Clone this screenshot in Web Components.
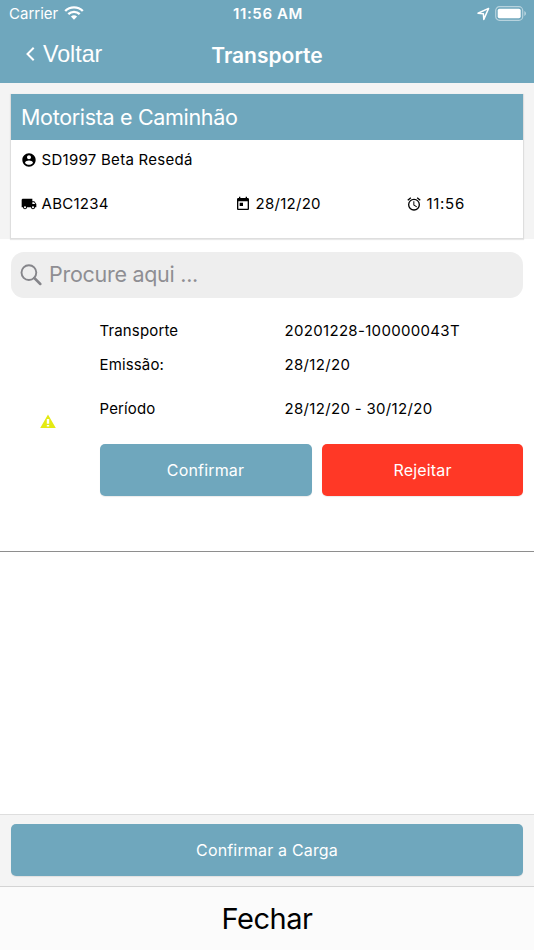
<!DOCTYPE html>
<html lang="pt-BR">
<head>
<meta charset="utf-8">
<meta name="viewport" content="width=device-width, initial-scale=1">
<title>Transporte</title>
<style>
  html, body { height: 100%; }
  body {
    --brand: #6fa7bd;
    --danger: #ff3826;
    --bar: #f4f4f4;
    margin: 0;
    overflow: hidden;
    background: #fff;
    color: #000;
    font: 15px/20px Inter, "Liberation Sans", sans-serif;
  }
</style>
</head>
<body>
<app-screen>
  <status-bar slot="top" carrier="Carrier" time="11:56 AM"></status-bar>
  <nav-bar slot="top" back="Voltar">Transporte</nav-bar>

  <driver-card slot="top" heading="Motorista e Caminhão">
    <icon-label icon="person" slot="driver">SD1997 Beta Resedá</icon-label>
    <icon-label icon="truck">ABC1234</icon-label>
    <icon-label icon="calendar">28/12/20</icon-label>
    <icon-label icon="alarm">11:56</icon-label>
  </driver-card>

  <search-field placeholder="Procure aqui ..."></search-field>

  <transport-item>
    <detail-row label="Transporte">20201228-100000043T</detail-row>
    <detail-row label="Emissão:">28/12/20</detail-row>
    <detail-row label="Período" spaced>28/12/20 - 30/12/20</detail-row>
    <app-button slot="actions">Confirmar</app-button>
    <app-button slot="actions" color="danger">Rejeitar</app-button>
  </transport-item>

  <app-button slot="footer">Confirmar a Carga</app-button>
  <close-bar slot="close">Fechar</close-bar>
</app-screen>

<script>
const ICONS = {
  person: ['0 0 24 24', '<path d="M12 2C6.48 2 2 6.48 2 12s4.48 10 10 10 10-4.48 10-10S17.52 2 12 2zm0 3c1.66 0 3 1.34 3 3s-1.34 3-3 3-3-1.34-3-3 1.34-3 3-3zm0 14.2c-2.5 0-4.71-1.28-6-3.22.03-1.99 4-3.08 6-3.08 1.99 0 5.97 1.09 6 3.08-1.29 1.94-3.5 3.22-6 3.22z"/>'],
  truck: ['0 0 24 24', '<path d="M20 8h-3V4H3c-1.1 0-2 .9-2 2v11h2c0 1.66 1.34 3 3 3s3-1.34 3-3h6c0 1.66 1.34 3 3 3s3-1.34 3-3h2v-5l-3-4zM6 18.5c-.83 0-1.5-.67-1.5-1.5s.67-1.5 1.5-1.5 1.5.67 1.5 1.5-.67 1.5-1.5 1.5zm13.5-9l1.96 2.5H17V9.5h2.5zm-1.5 9c-.83 0-1.5-.67-1.5-1.5s.67-1.5 1.5-1.5 1.5.67 1.5 1.5-.67 1.5-1.5 1.5z"/>'],
  calendar: ['0 0 24 24', '<path d="M19 3h-1V1h-2v2H8V1H6v2H5c-1.11 0-2 .9-2 2v14c0 1.1.89 2 2 2h14c1.1 0 2-.9 2-2V5c0-1.1-.9-2-2-2zm0 16H5V8h14v11zM7 10h5v5H7z"/>'],
  alarm: ['0 0 24 24', '<path d="M22 5.72l-4.6-3.86-1.29 1.53 4.6 3.86L22 5.72zM7.88 3.39L6.6 1.86 2 5.71l1.29 1.53 4.59-3.85zM12.5 8H11v6l4.75 2.85.75-1.23-4-2.37V8zM12 4a9 9 0 1 0 0 18 9 9 0 0 0 0-18zm0 16a7 7 0 1 1 0-14 7 7 0 0 1 0 14z"/>'],
  warning: ['0 0 24 24', '<path d="M1 21h22L12 2 1 21zm12.7-1.8h-3.4v-2.4h3.4v2.4zm0-4.2h-3.4V8.5h3.4V15z"/>'],
  search: ['0 0 22 22', '<g fill="none" stroke="currentColor" stroke-width="1.9"><circle cx="8.9" cy="8.6" r="7.4"/><path d="M14.3 14l6 6" stroke-width="2.5" stroke-linecap="round"/></g>'],
  back: ['0 0 10 16', '<path d="M8.7 1.7L2.5 8l6.2 6.3" fill="none" stroke="currentColor" stroke-width="2"/>'],
  wifi: ['0 0 20 14', '<path d="M1.2 5a12.6 12.6 0 0 1 17.6 0M4.3 8.2a8.2 8.2 0 0 1 11.4 0" fill="none" stroke="currentColor" stroke-width="2.4"/><path d="M10 13.8l3.1-3.2a4.5 4.5 0 0 0-6.2 0z"/>'],
  location: ['0 0 14 14', '<path d="M12.6 1.4L2 6.3l5.400.4.4 5.700z" fill="none" stroke="currentColor" stroke-width="1.5" stroke-linejoin="round"/>'],
  battery: ['0 0 32 16', '<rect x=".7" y=".7" width="27" height="13.6" rx="3.8" fill="none" stroke="currentColor" stroke-width="1.2" opacity=".5"/><rect x="2.7" y="2.7" width="23" height="9.6" rx="1.8"/><path d="M29.3 5v5c1-.4 1.7-1.3 1.7-2.5S30.3 5.4 29.3 5z" opacity=".5"/>']
};

class AppIcon extends HTMLElement {
  connectedCallback() {
    const [viewBox, shape] = ICONS[this.getAttribute('name')];
    const root = this.shadowRoot || this.attachShadow({ mode: 'open' });
    root.innerHTML = `
      <style>
        :host { display: block; flex: none; width: 16px; height: 16px; }
        svg { display: block; width: 100%; height: 100%; fill: currentColor; }
      </style>
      <svg viewBox="${viewBox}" aria-hidden="true">${shape}</svg>
    `;
  }
}

class AppScreen extends HTMLElement {
  constructor() {
    super();
    this.attachShadow({ mode: 'open' }).innerHTML = `
      <style>
        :host { display: flex; flex-direction: column; height: 100vh; }
        main { flex: 1; min-height: 0; }
        footer {
          height: 51.5px;
          padding: 9.4px 11px 10.1px;
          border-top: 1px solid #dedede;
          background: var(--bar);
        }
      </style>
      <header><slot name="top"></slot></header>
      <main><slot></slot></main>
      <footer><slot name="footer"></slot></footer>
      <slot name="close"></slot>
    `;
  }
}

class StatusBar extends HTMLElement {
  connectedCallback() {
    this.attachShadow({ mode: 'open' }).innerHTML = `
      <style>
        :host {
          display: grid;
          grid-template-columns: 1fr auto 1fr;
          align-items: center;
          height: 28px;
          padding: 0 7px 0 9px;
          background: var(--brand);
          color: #fff;
        }
        .left, .right { display: flex; align-items: center; }
        .left { gap: 6px; }
        .right { justify-content: flex-end; gap: 5px; }
        .time { font-weight: 600; letter-spacing: .6px; }
        .wifi { width: 20px; height: 14px; margin-top: -2px; }
        .location { width: 14px; height: 14px; }
        .battery { width: 32px; height: 16px; margin-top: -1px; }
      </style>
      <div class="left"><span>${this.getAttribute('carrier')}</span><app-icon class="wifi" name="wifi"></app-icon></div>
      <span class="time">${this.getAttribute('time')}</span>
      <div class="right"><app-icon class="location" name="location"></app-icon><app-icon class="battery" name="battery"></app-icon></div>
    `;
  }
}

class NavBar extends HTMLElement {
  connectedCallback() {
    this.attachShadow({ mode: 'open' }).innerHTML = `
      <style>
        :host {
          display: grid;
          grid-template-columns: 1fr auto 1fr;
          align-items: center;
          height: 55px;
          background: var(--brand);
          color: #fff;
        }
        button {
          all: unset;
          display: flex;
          align-items: center;
          gap: 8px;
          margin-bottom: 3px;
          padding-left: 25px;
          font: 23.2px/28px "Liberation Sans", sans-serif;
        }
        app-icon { width: 10px; height: 16px; }
        .title { font-size: 21px; font-weight: 600; }
      </style>
      <button><app-icon name="back"></app-icon><span>${this.getAttribute('back')}</span></button>
      <span class="title"><slot></slot></span>
    `;
  }
}

class DriverCard extends HTMLElement {
  connectedCallback() {
    this.attachShadow({ mode: 'open' }).innerHTML = `
      <style>
        :host { display: block; padding: 11px 11px 1px; background: var(--bar); }
        .card {
          height: 144px;
          background: #fff;
          box-shadow: 0 1px 1px 1px rgba(0,0,0,.09);
        }
        .heading {
          height: 46px;
          padding-left: 10px;
          background: var(--brand);
          color: #fff;
          font-size: 21.5px;
          line-height: 46px;
          letter-spacing: -.33px;
        }
        .driver { padding: 10px 10px 24px; }
        .info {
          display: grid;
          grid-template-columns: 214px 171px auto;
          padding-left: 10px;
        }
      </style>
      <div class="card">
        <div class="heading">${this.getAttribute('heading')}</div>
        <div class="driver"><slot name="driver"></slot></div>
        <div class="info"><slot></slot></div>
      </div>
    `;
  }
}

class IconLabel extends HTMLElement {
  connectedCallback() {
    this.attachShadow({ mode: 'open' }).innerHTML = `
      <style>
        :host {
          display: flex;
          align-items: center;
          gap: 4.5px;
          letter-spacing: .28px;
        }
        :host([icon="alarm"]) { letter-spacing: .7px; }
      </style>
      <app-icon name="${this.getAttribute('icon')}"></app-icon><span><slot></slot></span>
    `;
  }
}

class SearchField extends HTMLElement {
  connectedCallback() {
    this.attachShadow({ mode: 'open' }).innerHTML = `
      <style>
        :host {
          display: flex;
          align-items: center;
          gap: 7px;
          height: 46px;
          margin: 13px 11px 0;
          padding-left: 9px;
          border-radius: 13px;
          background: #eee;
          color: #8e8e93;
          font-size: 21.5px;
          letter-spacing: -.28px;
        }
        app-icon { width: 22px; height: 22px; color: #85858a; }
        span { margin-top: -2px; }
      </style>
      <app-icon name="search"></app-icon>
      <span>${this.getAttribute('placeholder')}</span>
    `;
  }
}

class TransportItem extends HTMLElement {
  constructor() {
    super();
    this.attachShadow({ mode: 'open' }).innerHTML = `
      <style>
        :host {
          display: grid;
          grid-template-columns: 99.5px 1fr;
          height: 230px;
          padding: 23px 11px 0 0;
          border-bottom: 1px solid #8e8e8e;
        }
        .state { padding: 92px 0 0 39px; }
        .state app-icon { width: 18px; height: 17px; color: #e4ea12; }
        .actions {
          display: grid;
          grid-template-columns: 212px 1fr;
          gap: 10.5px;
          margin-top: 25px;
        }
      </style>
      <div class="state"><app-icon name="warning"></app-icon></div>
      <div>
        <slot></slot>
        <div class="actions"><slot name="actions"></slot></div>
      </div>
    `;
  }
}

class DetailRow extends HTMLElement {
  connectedCallback() {
    this.attachShadow({ mode: 'open' }).innerHTML = `
      <style>
        :host { display: grid; grid-template-columns: 185px 1fr; margin-bottom: 14px; }
        :host([spaced]) { margin: 24px 0 0; }
        .label { letter-spacing: .15px; }
        .value { letter-spacing: .32px; }
      </style>
      <span class="label">${this.getAttribute('label')}</span><span class="value"><slot></slot></span>
    `;
  }
}

class AppButton extends HTMLElement {
  constructor() {
    super();
    this.attachShadow({ mode: 'open' }).innerHTML = `
      <style>
        :host { display: block; }
        button {
          all: unset;
          display: block;
          width: 100%;
          height: 51.5px;
          border-radius: 5px;
          background: var(--brand);
          color: #fff;
          font-size: 16px;
          line-height: 52px;
          text-align: center;
          letter-spacing: .17px;
          box-shadow: 0 1px 1px rgba(0,0,0,.08);
        }
        :host([color="danger"]) button { background: var(--danger); }
      </style>
      <button><slot></slot></button>
    `;
  }
}

class CloseBar extends HTMLElement {
  constructor() {
    super();
    this.attachShadow({ mode: 'open' }).innerHTML = `
      <style>
        :host {
          display: block;
          height: 63px;
          border-top: 1px solid #d4d4d4;
          background: #fbfbfb;
          font-size: 29px;
          line-height: 64px;
          letter-spacing: -.5px;
          text-align: center;
        }
      </style>
      <slot></slot>
    `;
  }
}

customElements.define('app-icon', AppIcon);
customElements.define('app-screen', AppScreen);
customElements.define('status-bar', StatusBar);
customElements.define('nav-bar', NavBar);
customElements.define('driver-card', DriverCard);
customElements.define('icon-label', IconLabel);
customElements.define('search-field', SearchField);
customElements.define('transport-item', TransportItem);
customElements.define('detail-row', DetailRow);
customElements.define('app-button', AppButton);
customElements.define('close-bar', CloseBar);
</script>
</body>
</html>
